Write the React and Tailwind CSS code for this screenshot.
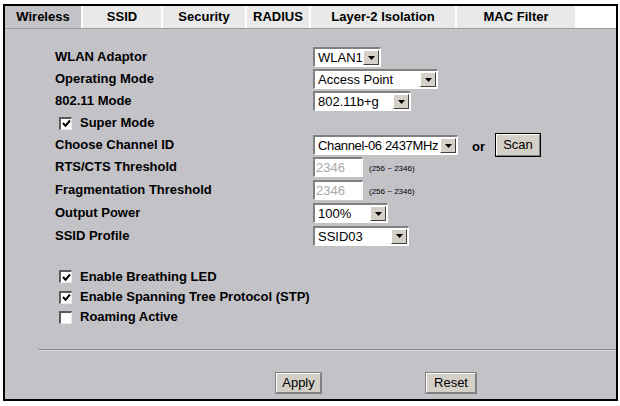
import React from "react";

const font = { fontFamily: '"Liberation Sans", Arial, sans-serif' };

function Arrow() {
  return (
    <div className="flex h-full w-[16px] shrink-0 items-center justify-center border-t border-l border-t-white border-l-white border-r border-b border-r-[#404040] border-b-[#404040] bg-[#d4d0c8]">
      <svg width="7" height="4" viewBox="0 0 7 4">
        <polygon points="0,0 7,0 3.5,4" fill="#000" />
      </svg>
    </div>
  );
}

function Select({ w, text, tight }) {
  return (
    <div
      className={`flex h-[20px] items-stretch border-t-2 border-l-2 border-t-[#808080] border-l-[#808080] border-r border-b border-r-white border-b-white bg-white p-px ${w}`}
    >
      <div
        className={`flex-1 overflow-hidden whitespace-nowrap pl-[2px] text-[13px] leading-[16px] text-black ${
          tight ? "tracking-[-0.35px]" : ""
        }`}
      >
        {text}
      </div>
      <Arrow />
    </div>
  );
}

function Input({ text }) {
  return (
    <div className="flex h-[20px] w-[50px] items-center border-t-2 border-l-2 border-t-[#808080] border-l-[#808080] border-r border-b border-r-white border-b-white bg-white pl-[1px] text-[13px] text-[#a8a8a8]">
      {text}
    </div>
  );
}

function Check({ checked }) {
  return (
    <div className="flex h-[13px] w-[13px] items-center justify-center border-t-2 border-l-2 border-t-[#5a5a5a] border-l-[#5a5a5a] border-r border-b border-r-[#e8e8e8] border-b-[#e8e8e8] bg-white">
      {checked && (
        <svg width="9" height="9" viewBox="0 0 9 9">
          <path d="M1 4 L3.5 6.8 L8 1.5" stroke="#000" strokeWidth="2" fill="none" />
        </svg>
      )}
    </div>
  );
}

function Btn({ w, h, children, dark }) {
  return (
    <div
      className={`flex items-center justify-center border ${dark ? "border-black" : "border-[#808080]"} bg-[#d4d0c8] text-[13px] text-black ${w} ${h}`}
    >
      <div className="flex h-full w-full items-center justify-center border-t border-l border-t-white border-l-white border-r border-b border-r-[#808080] border-b-[#808080]">
        {children}
      </div>
    </div>
  );
}

function Row({ h, label, children }) {
  return (
    <div className={`flex items-center ${h}`}>
      <div className="w-[258px] text-[13px] font-bold text-black">{label}</div>
      <div className="flex items-center">{children}</div>
    </div>
  );
}

function Hint() {
  return <span className="ml-[6px] mt-[4px] text-[8px] text-black">(256 ~ 2346)</span>;
}

const tabs = [
  { name: "Wireless", w: "w-[76px]", active: true },
  { name: "SSID", w: "w-[78px]" },
  { name: "Security", w: "w-[82px]" },
  { name: "RADIUS", w: "w-[62px]" },
  { name: "Layer-2 Isolation", w: "w-[144px]" },
  { name: "MAC Filter", w: "w-[118px]" },
];

export default function App() {
  return (
    <div className="h-[406px] w-[620px] bg-white" style={font}>
      <div className="h-[4px]" />
      <div className="ml-[3px] flex h-[397px] w-[615px] flex-col border-2 border-black bg-[#c3c2c7]">
        <div className="flex h-[23px] border-b border-b-[#a0a0a0] bg-white">
          {tabs.map((t) => (
            <div
              key={t.name}
              className={`mr-[2px] flex items-center justify-center text-[13px] font-bold text-black ${t.w} ${
                t.active ? "bg-[#c3c2c7]" : "bg-[#e9e9e9]"
              }`}
            >
              {t.name}
            </div>
          ))}
          <div className="flex-1 bg-white" />
        </div>
        <div className="flex flex-1 flex-col pl-[50px] pt-[17px]">
          <Row h="h-[22px]" label="WLAN Adaptor">
            <Select w="w-[68px]" text="WLAN1" />
          </Row>
          <Row h="h-[22px]" label="Operating Mode">
            <Select w="w-[125px]" text="Access Point" />
          </Row>
          <Row h="h-[22px]" label="802.11 Mode">
            <Select w="w-[98px]" text="802.11b+g" />
          </Row>
          <div className="flex h-[22px] items-center pl-[4px]">
            <Check checked />
            <span className="ml-[8px] text-[13px] font-bold text-black">Super Mode</span>
          </div>
          <Row h="h-[22px]" label="Choose Channel ID">
            <Select w="w-[145px]" text="Channel-06 2437MHz" tight />
            <span className="ml-[14px] mr-[10px] mt-[3px] text-[13px] font-bold text-black">or</span>
            <Btn w="w-[46px]" h="h-[24px]" dark>
              Scan
            </Btn>
          </Row>
          <Row h="h-[22px]" label="RTS/CTS Threshold">
            <Input text="2346" />
            <Hint />
          </Row>
          <Row h="h-[24px]" label="Fragmentation Threshold">
            <Input text="2346" />
            <Hint />
          </Row>
          <Row h="h-[22px]" label="Output Power">
            <Select w="w-[75px]" text="100%" />
          </Row>
          <Row h="h-[23px]" label="SSID Profile">
            <Select w="w-[96px]" text="SSID03" />
          </Row>
          <div className="mt-[19px] flex flex-col pl-[4px]">
            <div className="flex h-[21px] items-center">
              <Check checked />
              <span className="ml-[8px] text-[13px] font-bold text-black">Enable Breathing LED</span>
            </div>
            <div className="flex h-[20px] items-center">
              <Check checked />
              <span className="ml-[8px] text-[13px] font-bold text-black">
                Enable Spanning Tree Protocol (STP)
              </span>
            </div>
            <div className="flex h-[20px] items-center">
              <Check />
              <span className="ml-[8px] text-[13px] font-bold text-black">Roaming Active</span>
            </div>
          </div>
        </div>
        <div className="mb-[21px] ml-[33px] h-[2px] border-t border-t-[#8a8a8a] border-b border-b-[#d8d8d8]" />
        <div className="mb-[5px] flex pl-[270px]">
          <Btn w="w-[47px]" h="h-[22px]">Apply</Btn>
          <div className="w-[103px]" />
          <Btn w="w-[52px]" h="h-[22px]">Reset</Btn>
        </div>
      </div>
    </div>
  );
}
